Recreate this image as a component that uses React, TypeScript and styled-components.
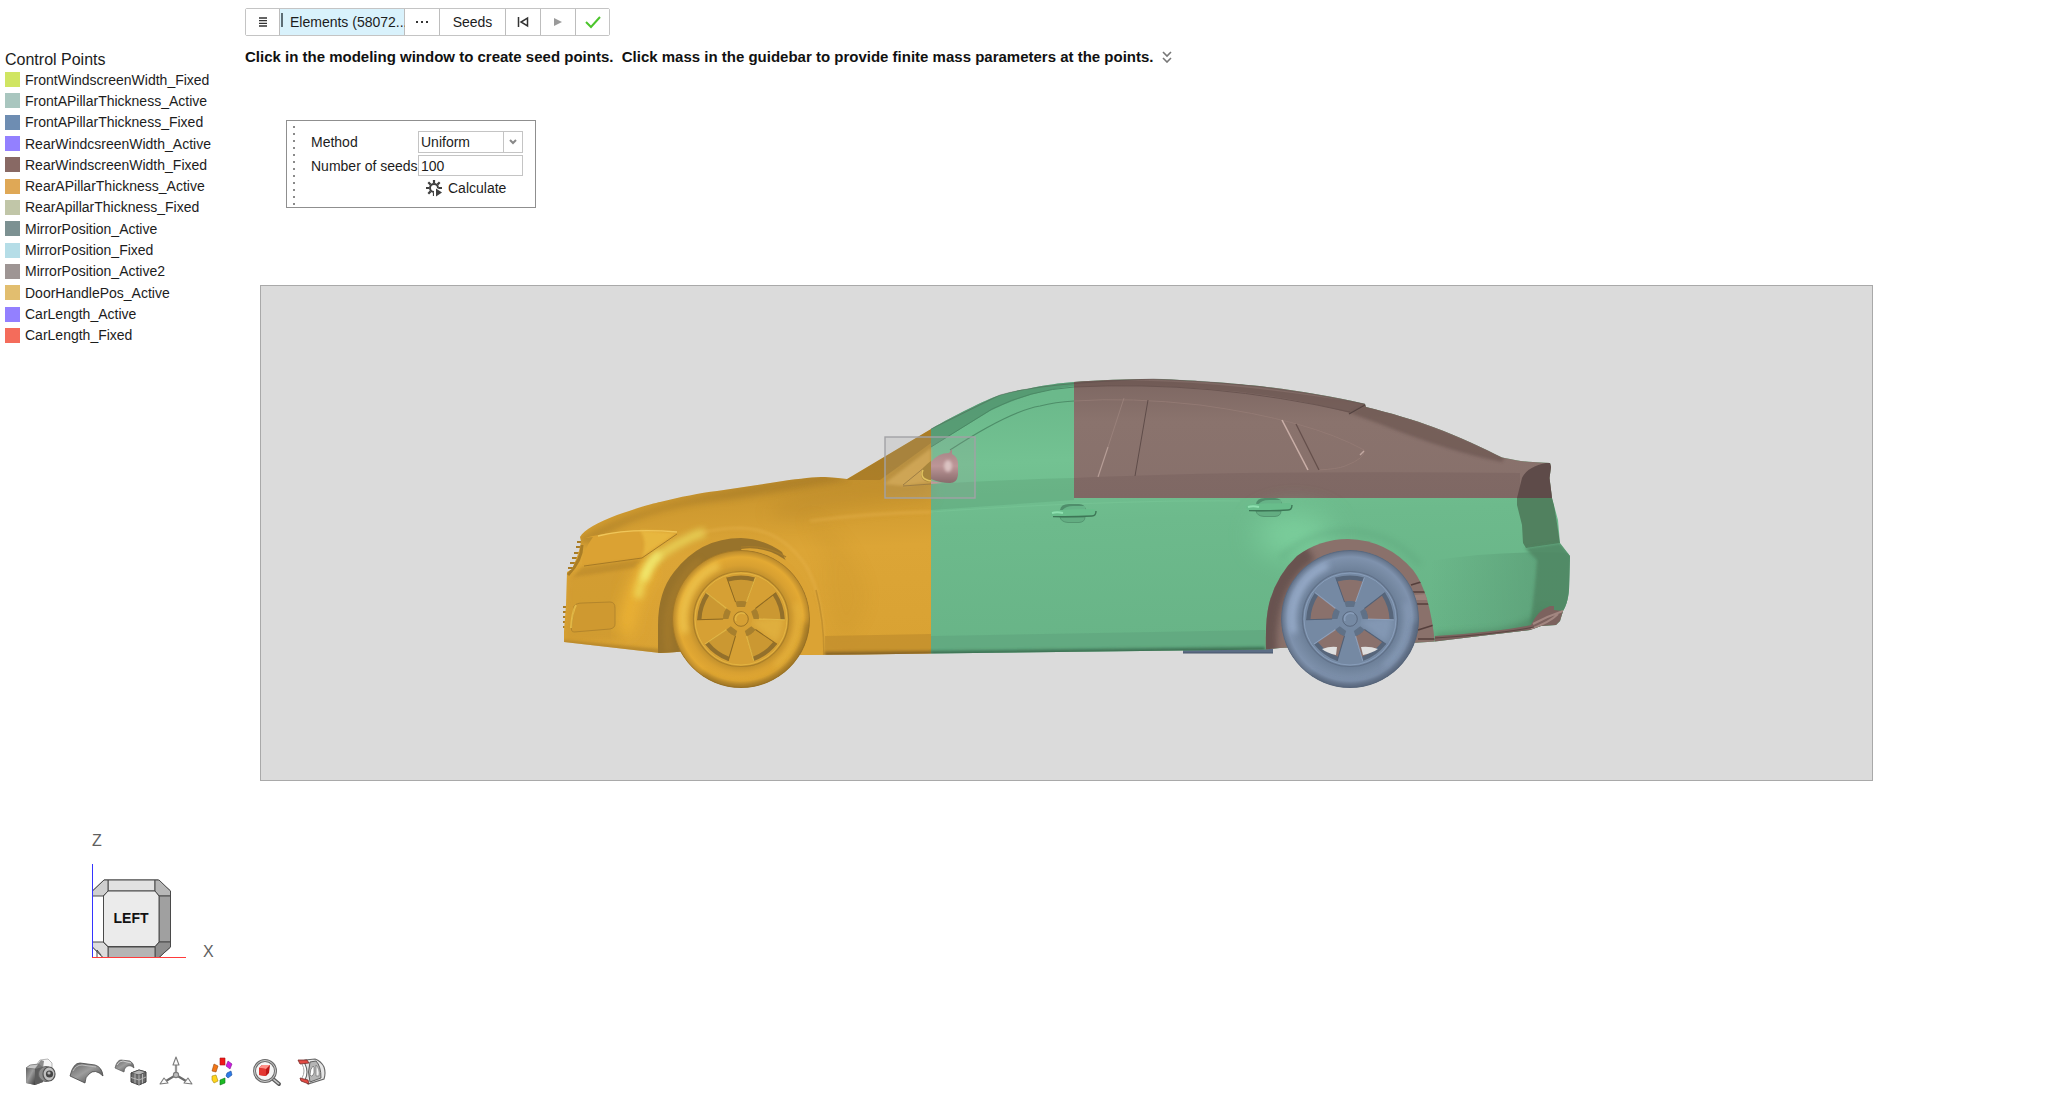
import React from "react";
import styled, { createGlobalStyle } from "styled-components";

const Global = createGlobalStyle`
  *, *::before, *::after { box-sizing: border-box; }
  body {
    margin: 0;
    background: #ffffff;
    color: #1c1c1c;
    font-family: "Liberation Sans", Arial, sans-serif;
    font-size: 14px;
    line-height: 20px;
  }
  button, input, select { font: inherit; color: inherit; }
`;

const Page = styled.div`
  min-height: 100vh;
  display: flex;
  flex-direction: column;
  overflow: hidden;
`;

const Workspace = styled.div`
  display: grid;
  grid-template-columns: 245px minmax(0, 1fr);
`;

const Legend = styled.aside`
  padding: 51px 0 0 5px;
`;

const LegendTitle = styled.h1`
  margin: 0;
  font-size: 16px;
  line-height: 18px;
  font-weight: 400;
`;

const LegendList = styled.ul`
  list-style: none;
  margin: 0;
  padding: 0;
  height: 277px;
  display: grid;
  grid-template-rows: repeat(13, 1fr);
`;

const LegendItem = styled.li`
  display: flex;
  align-items: center;
  gap: 5px;
  white-space: nowrap;
`;

const Swatch = styled.span<{ $color: string }>`
  width: 15px;
  height: 15px;
  flex: none;
  background: ${(p) => p.$color};
`;

const Main = styled.main`
  padding-top: 8px;
  display: flex;
  flex-direction: column;
  align-items: flex-start;
  min-width: 0;
`;

const Toolbar = styled.div`
  display: flex;
  height: 28px;
  border: 1px solid #c4c4c4;
  border-radius: 2px;
`;

const ToolButton = styled.button<{ $width: number; $active?: boolean }>`
  width: ${(p) => p.$width}px;
  padding: 0;
  display: flex;
  align-items: center;
  justify-content: ${(p) => (p.$active ? "flex-start" : "center")};
  border: 0;
  border-right: 1px solid #bdbdbd;
  background: ${(p) => (p.$active ? "#d9f2fc" : "#ffffff")};
  white-space: nowrap;
  &:last-child { border-right: 0; }
`;

const Caret = styled.span`
  width: 2px;
  height: 14px;
  margin: 0 7px 4px 1px;
  flex: none;
  background: #5d6d75;
`;

const Hint = styled.p`
  margin: 11px 0 0;
  display: flex;
  align-items: center;
  gap: 8px;
  font-size: 15px;
  font-weight: 700;
  color: #111111;
  white-space: pre;
`;

const PlainButton = styled.button`
  display: flex;
  align-items: center;
  gap: 5px;
  padding: 0;
  border: 0;
  background: none;
`;

const GuideBar = styled.form`
  margin: 53px 0 0 41px;
  width: 250px;
  height: 88px;
  display: flex;
  border: 1px solid #8f8f8f;
`;

const Grip = styled.div`
  width: 13px;
  padding: 5px 0 0 6px;
  display: flex;
  flex-direction: column;
  gap: 5px;
`;

const GripDot = styled.i`
  width: 2px;
  height: 2px;
  flex: none;
  background: #8a8a8a;
`;

const Fields = styled.div`
  flex: 1;
  padding: 10px 12px 0 11px;
  display: grid;
  grid-template-columns: 1fr 105px;
  grid-template-rows: 22px 21px 20px;
  row-gap: 2px;
  align-items: center;
`;

const FieldLabel = styled.label`
  white-space: nowrap;
`;

const SelectBox = styled.div`
  display: grid;
  grid-template-columns: 1fr 19px;
  height: 22px;
  border: 1px solid #c4c4c4;
`;

const Select = styled.select`
  grid-area: 1 / 1 / 2 / 3;
  appearance: none;
  padding: 0 2px;
  border: 0;
  border-radius: 0;
  background: transparent;
`;

const SelectArrow = styled.span`
  grid-area: 1 / 2 / 2 / 3;
  display: flex;
  align-items: center;
  justify-content: center;
  border-left: 1px solid #c4c4c4;
  pointer-events: none;
`;

const NumberInput = styled.input`
  width: 100%;
  height: 21px;
  padding: 0 2px;
  border: 1px solid #c4c4c4;
  border-radius: 0;
  outline: 0;
`;

const Actions = styled.div`
  grid-column: 2;
  padding-left: 8px;
`;

const Viewport = styled.section`
  align-self: stretch;
  margin: 77px 181px 0 15px;
  border: 1px solid #a9a9a9;
  background: #dbdbdb;
`;

const Drawing = styled.svg`
  display: block;
  width: 100%;
  height: auto;
`;

const CubeArea = styled.div`
  padding: 39px 0 0 80px;
`;

const CubeDrawing = styled.svg`
  display: block;
`;

const SharedPaints = styled.svg`
  position: absolute;
`;

const IconBar = styled.nav`
  margin-top: 89px;
  padding: 0 0 0 23px;
  display: flex;
  gap: 9px;
`;

const IconButton = styled.button`
  width: 36px;
  height: 36px;
  padding: 0;
  border: 0;
  background: none;
`;

const legend: [string, string][] = [
  ["FrontWindscreenWidth_Fixed", "#d0e562"],
  ["FrontAPillarThickness_Active", "#a9c6bf"],
  ["FrontAPillarThickness_Fixed", "#6e8db2"],
  ["RearWindcsreenWidth_Active", "#9380ff"],
  ["RearWindscreenWidth_Fixed", "#886964"],
  ["RearAPillarThickness_Active", "#dfa856"],
  ["RearApillarThickness_Fixed", "#c1c6a8"],
  ["MirrorPosition_Active", "#7c9192"],
  ["MirrorPosition_Fixed", "#b5dde7"],
  ["MirrorPosition_Active2", "#9e9594"],
  ["DoorHandlePos_Active", "#e2be6f"],
  ["CarLength_Active", "#9380ff"],
  ["CarLength_Fixed", "#f46c5b"],
];

const HOLE = "M-14.3 -41.5 Q0 -45.5 14.3 -41.5 L5.5 -17 Q0 -19 -5.5 -17Z";
const HOLE_INNER = "M-12.5 -37.5 Q0 -41 12.5 -37.5 L5.5 -17 Q0 -19 -5.5 -17Z";

type WheelProps = {
  x: number;
  tyre: string;
  rim: string;
  edge: string;
  light: string;
  lip: string;
  hole: string;
};

const Wheel = ({ x, tyre, rim, edge, light, lip, hole }: WheelProps) => (
  <g transform={`translate(${x} 619)`} clipPath="url(#wheelDisc)">
    <circle r="69" fill={`url(#${tyre})`} />
    <path d="M-56 14A58 58 0 0 1 -22 -54" fill="none" stroke={light} strokeWidth="7" opacity=".7" filter="url(#soft3)" />
    <path d="M55 -16A58 58 0 0 1 34 47" fill="none" stroke={light} strokeWidth="4" opacity=".4" filter="url(#soft3)" />
    <path d="M68 4A69 69 0 0 1 -40 57" fill="none" stroke={edge} strokeWidth="8" opacity=".7" filter="url(#soft3)" />
    <circle r="68.5" fill="none" stroke={edge} strokeWidth="1" opacity=".5" />
    <circle r="48" fill={rim} />
    <circle r="47.5" fill="none" stroke={edge} strokeWidth="1.2" opacity=".6" />
    <circle r="46" fill="none" stroke={light} strokeWidth="1" opacity=".4" />
    <path d="M8 2L42 -3A43 43 0 0 1 35 24Z" fill={light} opacity=".3" filter="url(#soft3)" />
    {[0, 72, 144, 216, 288].map((a) => (
      <g key={a} transform={`rotate(${a})`}>
        <path d={HOLE} fill={lip} />
        <path d={HOLE_INNER} fill={hole} />
        <path d="M14.3 -41.5L5.5 -17" stroke={light} strokeWidth="1" opacity=".6" />
        <path d="M-14.3 -41.5L-5.5 -17" stroke={edge} strokeWidth="1" />
        <path d="M-5.5 -17Q0 -19 5.5 -17L4 -12H-4Z" fill={lip} opacity=".7" />
      </g>
    ))}
    <circle r="11" fill={rim} />
    <circle r="7.3" fill={rim} stroke={edge} strokeWidth=".8" />
    <path d="M-5 2A6 6 0 0 1 4 -5" fill="none" stroke={light} strokeWidth="1.6" opacity=".4" />
  </g>
);

const Handle = ({ x, y }: { x: number; y: number }) => (
  <g transform={`translate(${x} ${y})`}>
    <path d="M-13 -2Q-13 -9 -4 -9H6Q12 -9 13 -3Z" fill="#4f8e6b" />
    <path d="M-11 -2Q-8 -7 0 -7H12V-2Z" fill="#66b387" />
    <path d="M-13 4Q-12 9 -5 9.500H6Q12 9 12 4Z" fill="#63ad82" stroke="#4f8e6b" strokeWidth=".8" />
    <path d="M-23 0Q-22 -3 -12 -3Q6 -4 20 -4Q23 -4 23 -1Q23 3 19 3Q0 4 -18 4Q-22 4 -23 0Z" fill="#68bd8b" />
    <path d="M-20 3.600Q0 4 19 3Q23 3 23 -2" fill="none" stroke="#3d7656" strokeWidth="1.400" />
    <path d="M-21 0Q-16 -1.500 -10 0" stroke="#8ee0b0" strokeWidth="2" fill="none" />
  </g>
);

const BODY =
  "M580 537C584 530 598 522 617 515C640 507 655 503 660 502C680 497 700 493 717 491L783 481C800 478.500 815 477 825 477L838 478L847 479L931 429C955 415 985 400 1000 395C1010 392 1018 390 1027 389C1045 385 1060 383 1074 382C1100 380 1125 379 1153 379C1180 379.500 1195 381 1220 382.500C1240 384 1260 386 1267 387C1300 391 1330 396 1365 404L1366 407C1390 413 1415 420 1433 427C1460 437 1485 449 1502 457.500C1515 460 1525 462 1533 462L1550 463L1551 467L1549.500 478L1552 498L1558 520L1560 543L1570 556L1569 590C1568 600 1566 606 1563 611L1560 621L1556 625L1541 626L1530 630L1480 636L1435 641.500L1413 643L1280 648L1265 649.500L1183 650.500L931 653.500L862 654.500L803 655L770 650L700 650L677 652L660 653L564 642L564 631L566 605L567 572L572 569C576 560 580 550 581 541Z";

const REAR_ARCH =
  "M1266 652Q1265 620 1269 604Q1276 576 1297 556Q1320 539 1348 539Q1387 540 1413 570Q1430 592 1435 644V656Z";

const CarModel = () => (
  <Drawing viewBox="261 286 1611 494" role="img" aria-label="Car model, left view">
    <defs>
      <clipPath id="body"><path d={BODY} /></clipPath>
      <clipPath id="rearArch"><path d={REAR_ARCH} /></clipPath>
      <clipPath id="wheelDisc"><circle r="69" /></clipPath>
      <filter id="soft2" x="-50%" y="-50%" width="200%" height="200%"><feGaussianBlur stdDeviation="1.500" /></filter>
      <filter id="soft3" x="-50%" y="-50%" width="200%" height="200%"><feGaussianBlur stdDeviation="3" /></filter>
      <filter id="soft8" x="-50%" y="-50%" width="200%" height="200%"><feGaussianBlur stdDeviation="8" /></filter>
      <filter id="soft14" x="-50%" y="-80%" width="200%" height="260%"><feGaussianBlur stdDeviation="14" /></filter>
      <linearGradient id="orange" gradientUnits="userSpaceOnUse" x1="740" y1="470" x2="750" y2="655">
        <stop offset="0" stopColor="#bd8c2d" />
        <stop offset=".2" stopColor="#cf9a30" />
        <stop offset=".45" stopColor="#dca536" />
        <stop offset="1" stopColor="#d9a233" />
      </linearGradient>
      <linearGradient id="green" gradientUnits="userSpaceOnUse" x1="1000" y1="400" x2="1010" y2="650">
        <stop offset="0" stopColor="#6bb98b" />
        <stop offset=".25" stopColor="#73c292" />
        <stop offset=".5" stopColor="#6dba8c" />
        <stop offset="1" stopColor="#68b487" />
      </linearGradient>
      <linearGradient id="brown" gradientUnits="userSpaceOnUse" x1="1200" y1="380" x2="1200" y2="498">
        <stop offset="0" stopColor="#7d6762" />
        <stop offset=".35" stopColor="#8a736d" />
        <stop offset="1" stopColor="#87706b" />
      </linearGradient>
      <linearGradient id="bumper" gradientUnits="userSpaceOnUse" x1="1430" y1="0" x2="1535" y2="0">
        <stop offset="0" stopColor="#579772" stopOpacity="0" />
        <stop offset="1" stopColor="#579772" stopOpacity=".55" />
      </linearGradient>
      <linearGradient id="mirror" x1="0" y1="0" x2="0" y2="1">
        <stop offset="0" stopColor="#a87f80" />
        <stop offset=".5" stopColor="#c39496" />
        <stop offset="1" stopColor="#835f60" />
      </linearGradient>
      <radialGradient id="tyreGold" gradientUnits="userSpaceOnUse" cx="0" cy="0" r="69">
        <stop offset=".68" stopColor="#c08f2d" />
        <stop offset=".78" stopColor="#d8a031" />
        <stop offset=".9" stopColor="#e3a933" />
        <stop offset="1" stopColor="#b4852c" />
      </radialGradient>
      <radialGradient id="tyreBlue" gradientUnits="userSpaceOnUse" cx="0" cy="0" r="69">
        <stop offset=".68" stopColor="#6b7e97" />
        <stop offset=".78" stopColor="#7588a1" />
        <stop offset=".9" stopColor="#7f92ad" />
        <stop offset="1" stopColor="#606f85" />
      </radialGradient>
    </defs>

    <path d="M1183 649H1273V653H1183Z" fill="#5c6d85" />
    <path d="M1183 653H1273" stroke="#48566b" strokeWidth="1" />

    <path
      d="M577 542h6M576 547h6M574 553h6M572 558h6M570 563h6M568 568h6M563 607h6M563 612h6M563 617h6M563 622h6M563 627h6"
      stroke="#a97c26"
      strokeWidth="1.800"
    />

    <g clipPath="url(#body)">
      <rect x="550" y="370" width="381" height="300" fill="url(#orange)" />
      <rect x="931" y="370" width="650" height="300" fill="url(#green)" />
      <rect x="1074" y="370" width="510" height="128" fill="url(#brown)" />

      {/* bonnet, nose and wing shading */}
      <path d="M575 540Q640 500 825 474L850 480Q780 492 725 500Q640 508 590 545Z" fill="#8d6820" opacity=".35" filter="url(#soft3)" />
      <path d="M765 514Q790 488 850 484L931 480V500Q850 508 790 522Z" fill="#a97c27" opacity=".22" filter="url(#soft8)" />
      <path d="M810 521Q870 513 931 512" fill="none" stroke="#edb957" strokeWidth="2" opacity=".5" filter="url(#soft2)" />
      <path d="M804 515Q850 530 866 590Q868 620 842 642Q822 600 826 560Z" fill="#b68526" opacity=".12" filter="url(#soft8)" />
      <path d="M567 575L644 556Q628 575 622 640L564 642Z" fill="#b8872b" opacity=".25" filter="url(#soft3)" />
      <path d="M624 634Q630 590 650 566" fill="none" stroke="#f2b834" strokeWidth="16" opacity=".8" filter="url(#soft8)" />
      <path d="M638 598Q641 570 664 552Q690 536 705 532" fill="none" stroke="#f0e868" strokeWidth="9" opacity=".6" filter="url(#soft3)" />
      <path d="M644 580Q648 562 660 553" fill="none" stroke="#f3ef76" strokeWidth="8" opacity=".8" filter="url(#soft3)" />
      <path d="M585 538Q610 531 650 530L677 533L642 558L582 565Q582 552 593 537Z" fill="#dba233" />
      <path d="M640 530L677 533L642 557Q648 542 640 530Z" fill="#edc044" opacity=".7" filter="url(#soft2)" />
      <path d="M584 566L642 558L677 534" fill="none" stroke="#a67a27" strokeWidth="1" />
      <path d="M582 567L642 559L634 568L573 577Z" fill="#a97b26" opacity=".4" filter="url(#soft2)" />
      <path d="M598 536Q630 528 677 532" fill="none" stroke="#efc65a" strokeWidth="1.400" />
      <path d="M568 575Q582 560 582 545" stroke="#956d21" strokeWidth="3" fill="none" opacity=".7" />
      <path d="M574 606Q576 603 583 603L610 602Q615 602 615 608V624Q615 628 610 629L574 632Q570 632 572 624Z" fill="#cf9930" stroke="#b3852c" strokeWidth="1" />
      <path d="M571 628Q572 612 576 605" stroke="#f3cf56" strokeWidth="2" fill="none" opacity=".6" />
      <path d="M563 640L660 649L676 650V656H560Z" fill="#9a7227" opacity=".5" filter="url(#soft2)" />

      {/* front wheel arch */}
      <path d="M700 533Q720 528 742 528Q782 530 806 566Q824 596 824 656" fill="none" stroke="#ecb953" strokeWidth="2" opacity=".5" filter="url(#soft2)" />
      <path d="M658 656V625Q658 592 674 572Q700 538 741 538Q764 539 782 552L812 620V656Z" fill="#98732b" />
      <path d="M741 550Q790 556 812 600V656H741Z" fill="#d39c32" />
      <path d="M741 549Q770 545 793 566Q822 596 824 656H800Z" fill="#dba334" />
      <path d="M741 547Q768 545 786 557" stroke="#a67b2a" strokeWidth="1.200" fill="none" />
      <path d="M669 652Q660 595 700 560" fill="none" stroke="#bd8b30" strokeWidth="6" opacity=".35" filter="url(#soft3)" />
      <path d="M824 656Q824 620 816 590" fill="none" stroke="#b48328" strokeWidth="1.600" opacity=".6" />

      {/* sills */}
      <path d="M825 636L931 634V660H825Z" fill="#b58429" opacity=".5" />
      <path d="M931 636L1265 630V660H931Z" fill="#5b9c78" opacity=".4" />
      <path d="M825 652L931 651V658H825Z" fill="#6d5120" opacity=".7" filter="url(#soft2)" />
      <path d="M931 651L1265 647V656H931Z" fill="#2d5941" opacity=".7" filter="url(#soft2)" />

      {/* windscreen and roof shading */}
      <path d="M846 480L931 429L931 443L880 480Z" fill="#9c7325" opacity=".6" />
      <path d="M884 484L931 448V482L905 486Z" fill="#deac4b" opacity=".8" filter="url(#soft2)" />
      <path d="M903 485L931 462M903 486L931 484" stroke="#9d7630" strokeWidth="1" />
      <path d="M931 428Q985 396 1010 390L1074 380V386Q1030 391 990 411L931 447Z" fill="#4c8a67" opacity=".65" />
      <path d="M931 447L992 409Q1030 390 1074 387" fill="none" stroke="#4b8965" strokeWidth="1" />
      <path d="M950 450Q1010 411 1040 406Q1055 402 1074 401" fill="none" stroke="#4e8e69" strokeWidth="1.200" />
      <path d="M1074 381Q1200 376 1366 404L1350 413Q1230 380 1074 387Z" fill="#69534f" opacity=".6" />
      <path d="M1074 387Q1210 380 1350 412" fill="none" stroke="#6a5551" strokeWidth="1" />
      <path d="M1366 404L1350 413L1380 424Q1450 452 1502 462L1505 457Q1430 422 1366 404Z" fill="#6a5450" opacity=".65" filter="url(#soft2)" />
      <path d="M1365 405L1349 414" stroke="#544340" strokeWidth="1.400" />
      <path d="M1074 401Q1130 397 1200 405Q1310 420 1364 450Q1366 458 1345 466Q1338 469 1318 470" fill="none" stroke="#957c75" strokeWidth="1" opacity=".8" />
      <path d="M1124 398L1108 447" stroke="#a08780" strokeWidth="1" opacity=".7" />
      <path d="M1108 447L1098 477" stroke="#bba29b" strokeWidth="1.200" opacity=".9" />
      <path d="M1148 400L1135 476" stroke="#5f4c49" strokeWidth="1" />
      <path d="M1282 420L1308 470" stroke="#c9aea7" strokeWidth="1.600" />
      <path d="M1296 424L1319 470" stroke="#644f4b" strokeWidth="1.200" />
      <path d="M1360 455L1364 451" stroke="#c2a8a1" strokeWidth="1.400" />
      <path d="M1074 478Q1250 470 1520 473V498H1074Z" fill="#735d59" opacity=".38" />
      <path d="M931 484Q1000 480 1074 478V500L931 510Z" fill="#57996f" opacity=".3" />
      <path d="M931 512Q1100 500 1240 501" fill="none" stroke="#7cca9b" strokeWidth="1.200" opacity=".4" />

      {/* rear quarter */}
      <ellipse cx="1294" cy="535" rx="38" ry="22" fill="#80d5a1" opacity=".75" filter="url(#soft14)" />
      <path d="M1280 558Q1310 530 1350 531Q1395 534 1420 565" fill="none" stroke="#569a74" strokeWidth="5" opacity=".3" filter="url(#soft3)" />
      <path d="M1430 561Q1500 550 1570 553V645H1430Z" fill="url(#bumper)" />
      <path d="M1552 462Q1528 465 1522 478L1517 498L1562 498V460Z" fill="#5e4b49" />
      <path d="M1517 498H1553L1560 543L1526 548L1523 543L1522 525L1517 505Z" fill="#51815f" />
      <path d="M1525 548L1560 543L1572 557L1570 612L1530 625Q1535 590 1537 560Z" fill="#508663" opacity=".85" filter="url(#soft2)" />
      <path d="M1435 634L1490 630Q1530 625 1545 606V640H1435Z" fill="#467a5a" opacity=".5" filter="url(#soft3)" />
      <path d="M1435 636Q1500 632 1531 625Q1538 610 1550 606L1554 606V610L1563 611V640L1435 650Z" fill="#7c625e" />
      <path d="M1533 624Q1548 616 1563 611M1531 629Q1550 622 1558 614" stroke="#a28680" strokeWidth="2" fill="none" />
      <path d="M1435 638Q1500 634 1534 627" stroke="#5c4643" strokeWidth="1" fill="none" />

      {/* rear wheel arch */}
      <g clipPath="url(#rearArch)">
        <rect x="1260" y="530" width="180" height="126" fill="#8a716b" />
        <path d="M1268 656Q1264 580 1310 552" fill="none" stroke="#5a4744" strokeWidth="18" opacity=".7" filter="url(#soft3)" />
        <path d="M1411 585L1421 582M1412 592H1428M1416 604H1430M1418 630L1434 625M1418 639H1435" stroke="#553f3c" strokeWidth="1.600" />
        <path d="M1414 595L1427 594L1429 600H1415Z" fill="#9c817b" />
      </g>
    </g>

    <path d="M931 429L1000 395Q1040 383 1153 379Q1260 382 1365 404" fill="none" stroke="#4d4643" strokeWidth="1" opacity=".35" />

    <Wheel x={741} tyre="tyreGold" rim="#d6a034" edge="#8f6a22" light="#f5d258" lip="#93702b" hole="#cb9832" />
    <Wheel x={1350} tyre="tyreBlue" rim="#7589a3" edge="#536176" light="#a6bbdb" lip="#57667b" hole="#8a716c" />
    <path d="M1322 649Q1330 646 1337 647L1336 655Q1327 653 1322 649ZM1378 649Q1370 646 1361 647L1363 655Q1372 653 1378 649Z" fill="#dfdfdf" />

    <Handle x={1073} y={513} />
    <Handle x={1269} y={507} />

    <path d="M931 461Q918 470 922 478Q924 482 931 482Z" fill="#a97f27" />
    <path d="M923 470Q919 479 931 481" stroke="#efcb51" strokeWidth="1.500" fill="none" />
    <path d="M931 462Q938 453 949 453L952 449V454Q958 457 958 464V475Q957 483 950 483Q940 483 931 479Z" fill="url(#mirror)" />
    <path d="M931 481L942 483L931 484Z" fill="#c99799" />
    <ellipse cx="948" cy="466" rx="4" ry="6" fill="#ecd0cf" opacity=".9" filter="url(#soft2)" />
    <rect x="885" y="437" width="90" height="61" fill="#a0a0a0" fillOpacity=".18" stroke="#a2a2a5" strokeWidth="1.400" />
  </Drawing>
);

const ViewCube = () => (
  <CubeDrawing width="140" height="145" viewBox="80 820 140 145" role="img" aria-label="View cube">
    <g stroke="#4a4a4a" strokeWidth="1" strokeLinejoin="round">
      <path d="M104 880H158L170.500 891V947L159 957.500H103L92.500 947V891Z" fill="#ffffff" />
      <path d="M108 880H155V891H108Z" fill="#e2e2e2" />
      <path d="M92.500 891L104 880H108V891L103 896H92.500Z" fill="#cfcfcf" />
      <path d="M155 880H159L170.500 891V896H159L155 891Z" fill="#b7b7b7" />
      <path d="M159 896H170.500V942H159Z" fill="#a0a0a0" />
      <path d="M159 942H170.500V947L159 957.500H155V947Z" fill="#8e8e8e" />
      <path d="M108 947H155V957.500H108Z" fill="#b5b5b5" />
      <path d="M92.500 942H103L108 947V957.500H103L92.500 947Z" fill="#dddddd" />
      <path d="M108 891H155L159 896V942L155 946.500H108L103.500 942V896Z" fill="#ebebeb" />
      <path d="M97 957V950L101 955" fill="none" />
    </g>
    <path d="M92.500 864V958" stroke="#3535ff" strokeWidth="1" />
    <path d="M92 957.500H186" stroke="#ff3b3b" strokeWidth="1" />
    <g fontFamily="Liberation Sans, Arial, sans-serif">
      <text x="131" y="923" textAnchor="middle" fontSize="14" fontWeight="700" fill="#111111">LEFT</text>
      <g fontSize="16" fill="#5f5f5f">
        <text x="92" y="846">Z</text>
        <text x="203" y="957">X</text>
      </g>
    </g>
  </CubeDrawing>
);

const HexIcon = ({ children }: { children: React.ReactNode }) => (
  <svg width="36" height="36" viewBox="0 0 36 36" aria-hidden="true">{children}</svg>
);

const CameraIcon = () => (
  <HexIcon>
    <path d="M14 10L17 6L25 5L29 9V18H14Z" fill="#f3f3f3" stroke="#a5a5a5" strokeWidth=".8" />
    <path d="M15 10L18 6L21 7L20 14H14Z" fill="#8d8d8d" />
    <path d="M3 14L7 11L16 10L20 13V28L12 31L3 29Z" fill="#777" />
    <path d="M3 14L12 15V31L3 29Z" fill="url(#metal)" />
    <path d="M3 14L7 11L16 10L12 15Z" fill="#c6c6c6" stroke="#666" strokeWidth=".6" />
    <path d="M12 15L20 13V28L12 31Z" fill="#5c5c5c" />
    <ellipse cx="23" cy="20" rx="7.500" ry="7.500" fill="#8d8d8d" stroke="#666" />
    <ellipse cx="26" cy="20" rx="6" ry="7" fill="#bfbfbf" stroke="#555" strokeWidth="1.200" />
    <circle cx="26.500" cy="20" r="3.600" fill="#444" />
    <circle cx="26" cy="19" r="1.600" fill="#b4b4b4" />
  </HexIcon>
);

const SurfaceIcon = () => (
  <HexIcon>
    <path d="M2 22Q5 9 12 9L27 11Q34 13 35 22Q27 14 21 20Q17 23 17 29Z" fill="url(#metal)" stroke="#444" strokeWidth=".8" />
    <path d="M5 17Q8 11 14 11L28 13" stroke="#bcbcbc" fill="none" />
  </HexIcon>
);

const MeshIcon = () => (
  <HexIcon>
    <path d="M2 14Q4 6 8 6L17 7Q21 9 21 14Q17 10 13 13Q11 15 11 18Z" fill="url(#metal)" stroke="#5a5a5a" strokeWidth=".7" />
    <path d="M4 11Q6 7 10 7L18 9" stroke="#d0d0d0" fill="none" />
    <path d="M18 19L26 16L33 18V28L26 31L18 28Z" fill="#6a6a6a" stroke="#3c3c3c" />
    <path d="M18 19L26 21L33 18L26 16Z" fill="#b5b5b5" stroke="#444" strokeWidth=".7" />
    <path d="M26 21V31M18 23.500L26 26L33 23M22 20V29.500M29.500 20V29.500" stroke="#bdbdbd" strokeWidth=".9" fill="none" />
  </HexIcon>
);

const AxesIcon = () => (
  <HexIcon>
    <path d="M18 11V21L8 27M18 21L28 27" stroke="#6a6a6a" strokeWidth="2.200" fill="none" />
    <path d="M18 11V20" stroke="#d8d8d8" strokeWidth=".8" />
    <g fill="#fafafa" stroke="#7b7b7b" strokeWidth="1.100" strokeLinejoin="round">
      <path d="M18 3L21 11H15Z" />
      <path d="M2 30L6 24L10 29Z" />
      <path d="M34 30L30 24L26 29Z" />
      <circle cx="18" cy="21" r="2.600" fill="#bcbcbc" />
    </g>
  </HexIcon>
);

const ColorsIcon = () => (
  <HexIcon>
    <path d="M17 4L22 4V11H17Z" fill="#f01818" stroke="#a71515" strokeWidth=".6" />
    <path d="M25 7L29 10L27 15L23 12Z" fill="#cc1ce0" stroke="#7f168c" strokeWidth=".6" />
    <path d="M24 19L28 17L29 21L25 24L23 22Z" fill="#2d7be8" stroke="#1b4e98" strokeWidth=".6" />
    <path d="M17 26L22 24V29L17 31Z" fill="#1bbb23" stroke="#127318" strokeWidth=".6" />
    <path d="M9 22L13 21L15 27L11 29L9 26Z" fill="#ffd51c" stroke="#a48712" strokeWidth=".6" />
    <path d="M11 10L15 12L13 18L9 17Z" fill="#f27516" stroke="#9b480b" strokeWidth=".6" />
  </HexIcon>
);

const FindIcon = () => (
  <HexIcon>
    <path d="M25 25L31 30" stroke="#5c5c5c" strokeWidth="4" strokeLinecap="round" />
    <path d="M25 25L31 30" stroke="#c9c9c9" strokeWidth="1.600" />
    <circle cx="17" cy="17" r="10.500" fill="#f5f5f5" stroke="#6c6c6c" strokeWidth="3" />
    <circle cx="17" cy="17" r="10.500" fill="none" stroke="#cdcdcd" strokeWidth="1" />
    <path d="M11 14L14 11H22L21 19L18 22L11 21Z" fill="#bc1616" />
    <path d="M11 14L14 11H22L18 15Z" fill="#ff8f87" />
    <path d="M11 14L18 15V22L11 21Z" fill="#e33631" />
  </HexIcon>
);

const SectionIcon = () => (
  <HexIcon>
    <path d="M12 6L22 5Q28 7 31 13Q33 19 31 25L15 30Q13 27 12 26Q16 18 12 10Z" fill="#e6e6e6" stroke="#666" strokeWidth="1.100" />
    <path d="M17 8L23 7Q28 12 28 24L17 28Q14 18 17 8Z" fill="#b5b5b5" stroke="#555" strokeWidth=".9" />
    <path d="M20 12Q17 15 17 21Q19 24 21 19V13Z" fill="#fff" stroke="#666" strokeWidth=".7" />
    <path d="M23 11Q27 15 26 22L23 22Z" fill="#efefef" stroke="#777" strokeWidth=".7" />
    <path d="M9 10Q13 17 9 24" fill="none" stroke="#a5a5a5" />
    <path d="M5 6L14 6L16 9L7 10Z" fill="#e24a43" stroke="#762c29" strokeWidth=".8" />
    <path d="M7 24L15 26L16 30L8 27Z" fill="#e24a43" stroke="#762c29" strokeWidth=".8" />
  </HexIcon>
);

const views: [string, () => React.ReactElement][] = [
  ["Capture", CameraIcon],
  ["Surface", SurfaceIcon],
  ["Mesh", MeshIcon],
  ["Axes", AxesIcon],
  ["Colors", ColorsIcon],
  ["Find", FindIcon],
  ["Section", SectionIcon],
];

export default function App() {
  return (
    <Page>
      <Global />
      <SharedPaints width="0" height="0" aria-hidden="true">
        <linearGradient id="metal" x1="0" y1="0" x2="1" y2="1">
          <stop offset="0" stopColor="#606060" />
          <stop offset=".45" stopColor="#9d9d9d" />
          <stop offset="1" stopColor="#3c3c3c" />
        </linearGradient>
      </SharedPaints>
      <Workspace>
        <Legend>
          <LegendTitle>Control Points</LegendTitle>
          <LegendList>
            {legend.map(([name, color]) => (
              <LegendItem key={name}>
                <Swatch $color={color} />
                {name}
              </LegendItem>
            ))}
          </LegendList>
        </Legend>
        <Main>
          <Toolbar>
            <ToolButton $width={34} aria-label="Menu">
              <svg width="10" height="10" viewBox="0 0 10 10"><path d="M1 1H9M1 3.700H9M1 6.400H9M1 9H9" stroke="#333" strokeWidth="1.300" /></svg>
            </ToolButton>
            <ToolButton $width={125} $active><Caret />Elements (58072...</ToolButton>
            <ToolButton $width={35} aria-label="More">
              <svg width="14" height="4" viewBox="0 0 14 4"><path d="M1 1h2v2H1zM6 1h2v2H6zM11 1h2v2h-2z" fill="#333" /></svg>
            </ToolButton>
            <ToolButton $width={66}>Seeds</ToolButton>
            <ToolButton $width={35} aria-label="Reset">
              <svg width="12" height="12" viewBox="0 0 12 12"><path d="M1.500 1V11M10.500 2V10L4 6Z" fill="none" stroke="#333" strokeWidth="1.500" /></svg>
            </ToolButton>
            <ToolButton $width={35} aria-label="Play">
              <svg width="8" height="10" viewBox="0 0 8 10"><path d="M0 1L8 5L0 9Z" fill="#9a9a9a" /></svg>
            </ToolButton>
            <ToolButton $width={33} aria-label="Accept">
              <svg width="16" height="14" viewBox="0 0 16 14"><path d="M1 7L6 12L15 2" fill="none" stroke="#4cc52c" strokeWidth="2" /></svg>
            </ToolButton>
          </Toolbar>
          <Hint>
            {"Click in the modeling window to create seed points.  Click mass in the guidebar to provide finite mass parameters at the points."}
            <PlainButton aria-label="Show more">
              <svg width="10" height="12" viewBox="0 0 10 12"><path d="M1 1L5 5L9 1M1 7L5 11L9 7" fill="none" stroke="#777" strokeWidth="1.600" /></svg>
            </PlainButton>
          </Hint>
          <GuideBar onSubmit={(e) => e.preventDefault()}>
            <Grip>
              {Array.from({ length: 12 }, (_, i) => <GripDot key={i} />)}
            </Grip>
            <Fields>
              <FieldLabel htmlFor="method">Method</FieldLabel>
              <SelectBox>
                <Select id="method" defaultValue="Uniform"><option>Uniform</option></Select>
                <SelectArrow>
                  <svg width="8" height="6" viewBox="0 0 8 6"><path d="M1 1L4 4L7 1" fill="none" stroke="#888" strokeWidth="2" /></svg>
                </SelectArrow>
              </SelectBox>
              <FieldLabel htmlFor="seeds">Number of seeds</FieldLabel>
              <NumberInput id="seeds" defaultValue="100" />
              <Actions>
                <PlainButton type="submit">
                  <svg width="17" height="17" viewBox="0 0 17 17">
                    <circle cx="8" cy="8" r="4" fill="none" stroke="#3f3f3f" strokeWidth="2" />
                    <path d="M8 0V3M0 8H3M2.300 2.300L4.600 4.600M13.700 2.300L11.400 4.600M2.300 13.700L4.600 11.400M13 8H16M8 13V16" stroke="#3f3f3f" strokeWidth="2.200" />
                    <path d="M8 6L18 12.500L8 19Z" fill="#fff" />
                    <path d="M10 8.500L16 12.500L10 16.500Z" fill="#3f3f3f" />
                  </svg>
                  Calculate
                </PlainButton>
              </Actions>
            </Fields>
          </GuideBar>
          <Viewport><CarModel /></Viewport>
        </Main>
      </Workspace>
      <CubeArea><ViewCube /></CubeArea>
      <IconBar>
        {views.map(([label, Icon]) => (
          <IconButton key={label} aria-label={label}><Icon /></IconButton>
        ))}
      </IconBar>
    </Page>
  );
}
